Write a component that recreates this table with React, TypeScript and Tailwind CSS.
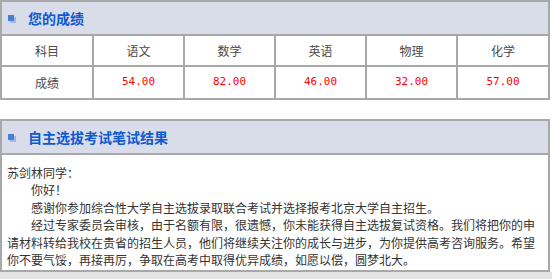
const scores = [
  { subject: "语文", score: "54.00" },
  { subject: "数学", score: "82.00" },
  { subject: "英语", score: "46.00" },
  { subject: "物理", score: "32.00" },
  { subject: "化学", score: "57.00" },
];

const cjk = { fontFamily: '"Noto Sans CJK SC", "Liberation Sans", sans-serif' };

const PanelTitle = ({ title }: { title: string }) => (
  <div className="h-[34px] bg-[#d9dde9] border-b-2 border-[#a8a8a8] flex items-center pl-[6px]">
    {/* stacked squares icon */}
    <span className="relative w-[9px] h-[9px] mr-[11px] mt-[2px]">
      <span className="absolute left-[2px] top-[2px] w-[6px] h-[6px] bg-[#9db8e4]" />
      <span className="absolute left-0 top-0 w-[6px] h-[6px] bg-[#4a7fd0]" />
    </span>
    <span className="text-[14px] font-bold text-[#0d5ad2] leading-none">{title}</span>
  </div>
);

const App = () => {
  return (
    <div className="w-[552px] h-[279px] bg-white overflow-hidden text-[12px]" style={cjk}>
      {/* 您的成绩 */}
      <div className="w-[550px] border-2 border-[#a8a8a8]">
        <PanelTitle title="您的成绩" />
        <table className="w-full border-collapse table-fixed text-[#4a4a4a]">
          <tbody>
            <tr className="h-[30px]">
              <td className="text-center border-r-2 border-[#a8a8a8]">科目</td>
              {scores.map((s, i) => (
                <td
                  key={s.subject}
                  className={
                    i < scores.length - 1
                      ? "text-center border-r-2 border-[#a8a8a8]"
                      : "text-center"
                  }
                >
                  {s.subject}
                </td>
              ))}
            </tr>
            <tr className="h-[32px] border-t-2 border-[#a8a8a8]">
              <td className="text-center border-r-2 border-[#a8a8a8]">成绩</td>
              {scores.map((s, i) => (
                <td
                  key={s.subject}
                  className={
                    i < scores.length - 1
                      ? "text-center border-r-2 border-[#a8a8a8] text-[#ff0000] text-[11px]"
                      : "text-center text-[#ff0000] text-[11px]"
                  }
                  style={{ fontFamily: '"DejaVu Sans Mono", monospace' }}
                >
                  {s.score}
                </td>
              ))}
            </tr>
          </tbody>
        </table>
      </div>

      {/* 自主选拔考试笔试结果 */}
      <div className="w-[550px] border-2 border-[#a8a8a8] mt-[19px]">
        <PanelTitle title="自主选拔考试笔试结果" />
        <div className="h-[115px] pl-[5px] pt-[9px] text-[#333] leading-[17.4px]">
          <div className="w-[534px]">
            <p>苏剑林同学：</p>
            <p className="indent-[24px]">你好！</p>
            <p className="indent-[24px]">
              感谢你参加综合性大学自主选拔录取联合考试并选择报考北京大学自主招生。
            </p>
            <p className="indent-[24px]">
              经过专家委员会审核，由于名额有限，很遗憾，你未能获得自主选拔复试资格。我们将把你的申请材料转给我校在贵省的招生人员，他们将继续关注你的成长与进步，为你提供高考咨询服务。希望你不要气馁，再接再厉，争取在高考中取得优异成绩，如愿以偿，圆梦北大。
            </p>
          </div>
        </div>
      </div>
      <div className="h-[10px] bg-[#e4e4e4]" />
    </div>
  );
};

export default App;
